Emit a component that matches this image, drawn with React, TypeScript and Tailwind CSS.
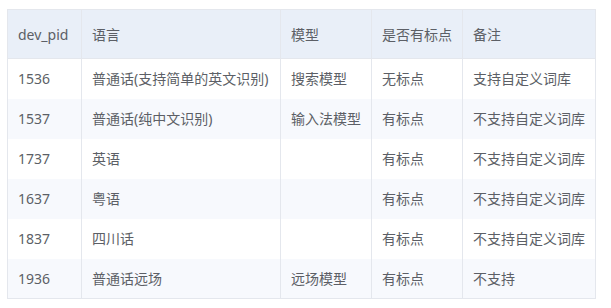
import React from "react";

const rows = [
  ["1536", "普通话(支持简单的英文识别)", "搜索模型", "无标点", "支持自定义词库"],
  ["1537", "普通话(纯中文识别)", "输入法模型", "有标点", "不支持自定义词库"],
  ["1737", "英语", "", "有标点", "不支持自定义词库"],
  ["1637", "粤语", "", "有标点", "不支持自定义词库"],
  ["1837", "四川话", "", "有标点", "不支持自定义词库"],
  ["1936", "普通话远场", "远场模型", "有标点", "不支持"],
];

const headers = ["dev_pid", "语言", "模型", "是否有标点", "备注"];
const widths = ["w-[74px]", "w-[199px]", "w-[91px]", "w-[91px]", "w-[133px]"];

export default function App() {
  return (
    <div className="w-[611px] h-[308px] bg-white pl-[7px] pt-[9px]" style={{ fontFamily: '"Noto Sans", "Noto Sans CJK SC", sans-serif' }}>
      <table className="border-collapse text-[14px] text-[#5c5f66] w-[589px] table-fixed">
        <thead>
          <tr className="bg-[#e9eff8] h-[49px]">
            {headers.map((h, i) => (
              <th key={i} className={`${widths[i]} border border-[#e4e7ed] px-[10px] text-left font-normal`}>{h}</th>
            ))}
          </tr>
        </thead>
        <tbody>
          {rows.map((r, ri) => (
            <tr key={ri} className={`h-[40px] ${ri % 2 === 1 ? "bg-[#f7f9fd]" : "bg-white"}`}>
              {r.map((c, ci) => (
                <td key={ci} className="border-x border-[#e4e7ed] px-[10px] whitespace-nowrap">{c}</td>
              ))}
            </tr>
          ))}
          <tr><td colSpan={5} className="h-0 p-0 border-t border-[#e4e7ed]"></td></tr>
        </tbody>
      </table>
    </div>
  );
}
